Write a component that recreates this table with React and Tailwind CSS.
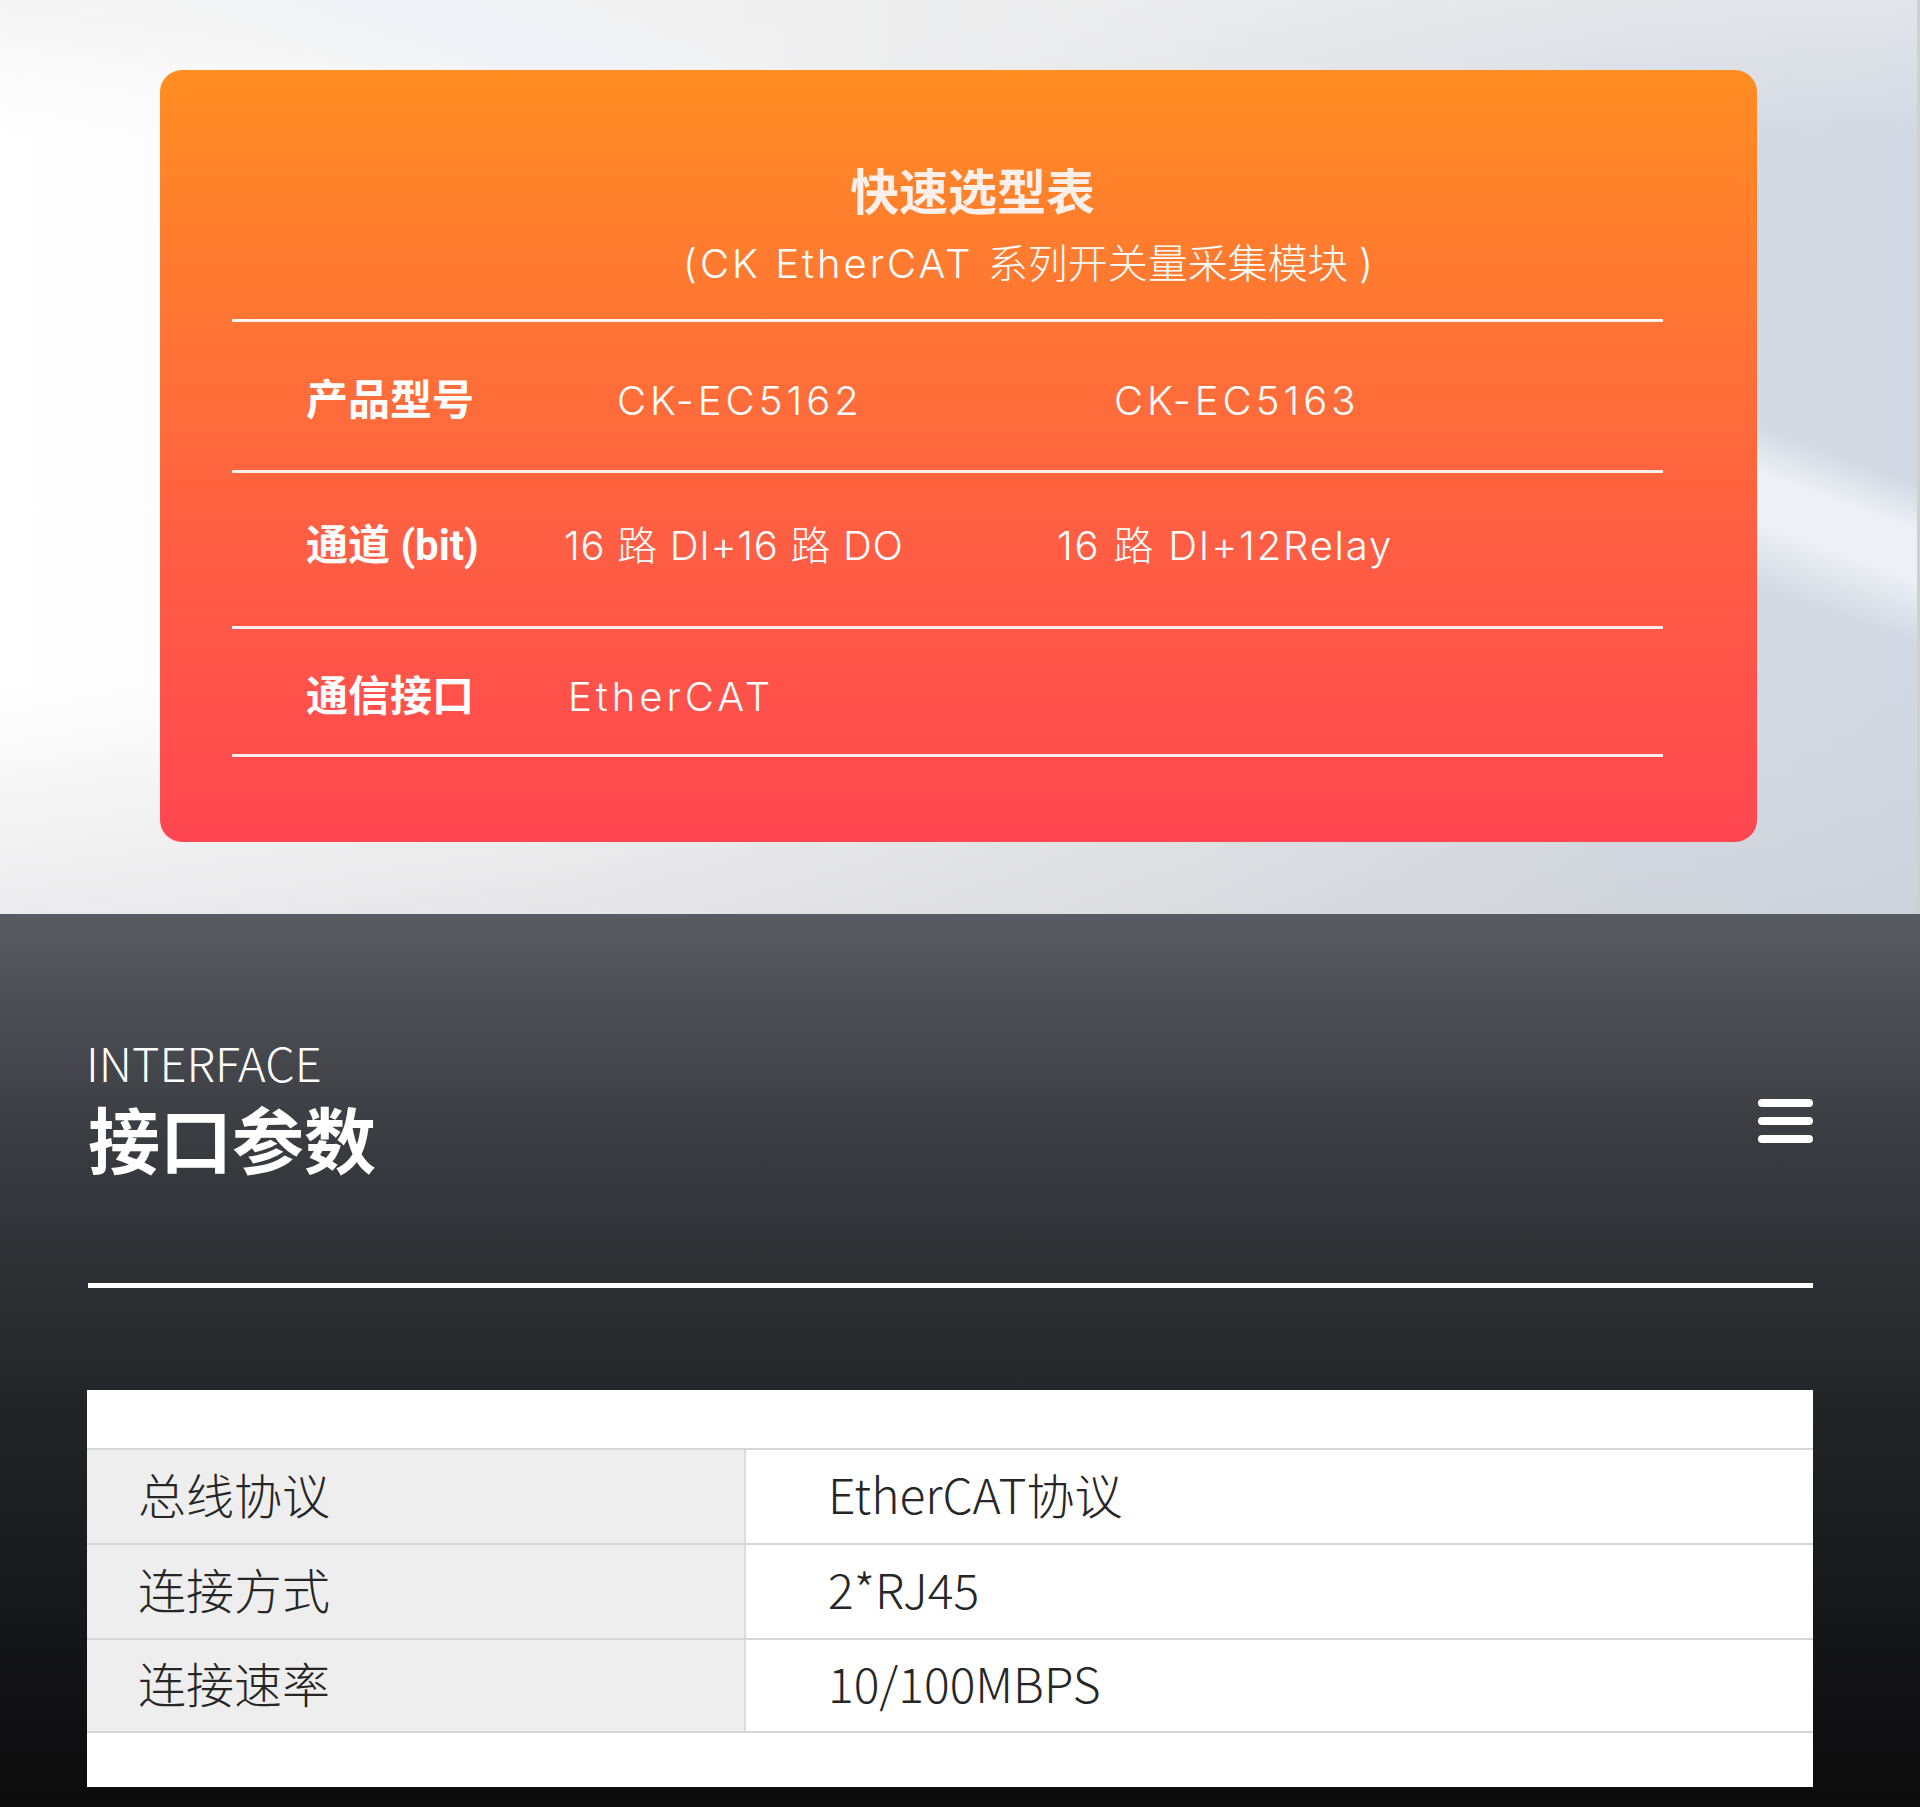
export default function App() {
  const sans = "font-['Roboto','Noto_Sans_CJK_SC',sans-serif]";
  const thin = "font-['Inter','Noto_Sans_CJK_SC',sans-serif] font-light";
  const cjk = "font-['Noto_Sans_CJK_SC','Noto_Sans',sans-serif]";
  const line = "h-[3px] w-[1431px] bg-white/90 ml-[72px]";
  return (
    <div className="w-[1920px] min-h-[1807px] flex flex-col">
      {/* top light section */}
      <div className="relative h-[914px] pt-[70px] pl-[160px] bg-[linear-gradient(90deg,#ffffff_0%,#f6f6f6_30%,#e6e7ea_60%,#d6dbe4_85%,#d2d8e3_100%)] overflow-hidden">
        <div className="absolute inset-0 bg-[linear-gradient(180deg,rgba(238,238,238,0.6)_0%,rgba(255,255,255,0)_15%,rgba(255,255,255,0)_75%,rgba(200,200,205,0.35)_100%)]" />
        <div className="absolute inset-0 bg-[linear-gradient(200deg,rgba(255,255,255,0)_0%,rgba(255,255,255,0)_30%,rgba(240,243,247,0.9)_33%,rgba(240,243,247,0.9)_36%,rgba(255,255,255,0)_40%)]" />
        <div className="absolute right-0 top-0 h-full w-[3px] bg-[#cfd0d2]" />
        <div
          className={`relative w-[1597px] h-[772px] rounded-[22px] bg-[linear-gradient(180deg,#ff8d22_0%,#ff7733_30%,#ff5f43_60%,#ff4651_100%)] text-white ${sans}`}
        >
          <div className="pt-[99px] pl-[690px] text-[49px] leading-[49px] font-bold text-[#fdf0ea]">
            快速选型表
          </div>
          <div className={`mt-[26px] pl-[523px] text-[40px] leading-[40px] ${thin}`}>
            <span className="tracking-[3px]">(CK EtherCAT </span>系列开关量采集模块 )
          </div>
          <div className={`mt-[35px] ${line}`} />
          <div className="h-[148px] flex items-center pl-[146px] pt-[10px] text-[40px] leading-[40px]">
            <div className="w-[311px] font-bold text-[42px]">产品型号</div>
            <div className={`w-[497px] tracking-[4px] ${thin}`}>CK-EC5162</div>
            <div className={`tracking-[4px] ${thin}`}>CK-EC5163</div>
          </div>
          <div className={line} />
          <div className="h-[153px] flex items-center pl-[146px] pb-[8px] text-[40px] leading-[40px]">
            <div className="w-[258px] font-bold text-[42px]">通道 (bit)</div>
            <div className={`w-[493px] tracking-[0.7px] ${thin}`}>16 路 DI+16 路 DO</div>
            <div className={`tracking-[1.8px] ${thin}`}>16 路 DI+12Relay</div>
          </div>
          <div className={line} />
          <div className="h-[125px] flex items-center pl-[146px] pt-[10px] text-[40px] leading-[40px]">
            <div className="w-[262px] font-bold text-[42px]">通信接口</div>
            <div className={`tracking-[4px] ${thin}`}>EtherCAT</div>
          </div>
          <div className={line} />
        </div>
      </div>

      {/* dark section */}
      <div className={`h-[893px] pt-[124px] pl-[86px] pr-[107px] bg-[linear-gradient(180deg,#585b62_0%,#3a3c41_25%,#232427_55%,#0b0b0c_100%)] ${cjk}`}>
        <div className="flex justify-between">
          <div className="text-white">
            <div className="text-[47px] leading-[47px] font-light">INTERFACE</div>
            <div className="mt-[16px] pl-[2px] text-[72px] leading-[72px] font-bold">接口参数</div>
          </div>
          <div className="mt-[61px] w-[55px] flex flex-col gap-[10px]">
            <div className="h-[8px] rounded-full bg-white" />
            <div className="h-[8px] rounded-full bg-white" />
            <div className="h-[8px] rounded-full bg-white" />
          </div>
        </div>
        <div className="mt-[110px] ml-[2px] h-[5px] bg-white" />
        <div className="mt-[102px] ml-px w-[1726px] bg-white pt-[58px] pb-[54px] text-[#262626] text-[48px] leading-[48px] font-light">
          {[
            ["总线协议", "EtherCAT协议"],
            ["连接方式", "2*RJ45"],
            ["连接速率", "10/100MBPS"],
          ].map(([k, v], i) => (
            <div
              key={k}
              className={`flex h-[95px] border-t-2 border-[#d6d6d6] ${i === 2 ? "border-b-2" : ""}`}
            >
              <div className="w-[659px] bg-[#eeeeee] border-r-2 border-[#dcdcdc] flex items-center pl-[51px] pb-[8px]">
                {k}
              </div>
              <div className="flex-1 flex items-center pl-[82px] pb-[8px]">{v}</div>
            </div>
          ))}
        </div>
      </div>
    </div>
  );
}
